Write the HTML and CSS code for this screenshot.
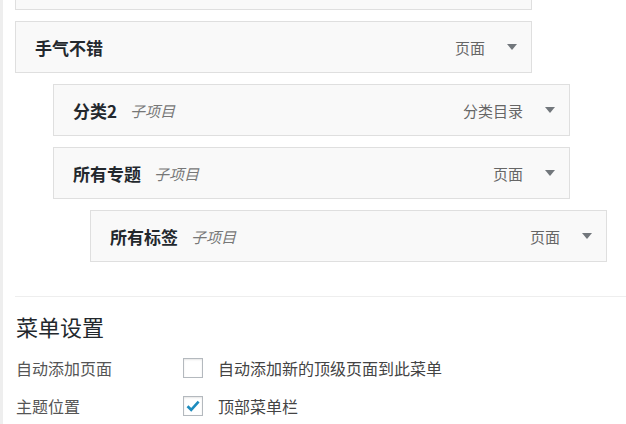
FILE: index.html
```html
<!DOCTYPE html>
<html lang="zh-CN">
<head>
  <meta charset="UTF-8">
  <meta name="viewport" content="width=device-width, initial-scale=1.0">
  <title>菜单</title>
  <link rel="stylesheet" href="styles.css">
</head>
<body>
  <div class="page">
    <!-- menu structure, first item scrolled out of view -->
    <ul class="menu-list">
      <li class="menu-item depth-0"></li>
      <li class="menu-item depth-0">
        <span class="item-title">手气不错</span>
        <span class="item-type">页面</span>
        <span class="item-arrow"></span>
      </li>
      <li class="menu-item depth-1">
        <span class="item-title">分类2</span>
        <span class="item-sub">子项目</span>
        <span class="item-type">分类目录</span>
        <span class="item-arrow"></span>
      </li>
      <li class="menu-item depth-1">
        <span class="item-title">所有专题</span>
        <span class="item-sub">子项目</span>
        <span class="item-type">页面</span>
        <span class="item-arrow"></span>
      </li>
      <li class="menu-item depth-2">
        <span class="item-title">所有标签</span>
        <span class="item-sub">子项目</span>
        <span class="item-type">页面</span>
        <span class="item-arrow"></span>
      </li>
    </ul>

    <div class="menu-settings">
      <h3>菜单设置</h3>
      <div class="setting-row">
        <div class="setting-label">自动添加页面</div>
        <label class="setting-field">
          <span class="checkbox"></span>
          自动添加新的顶级页面到此菜单
        </label>
      </div>
      <div class="setting-row">
        <div class="setting-label">主题位置</div>
        <label class="setting-field">
          <span class="checkbox checked">
            <svg width="16" height="16" viewBox="0 0 16 16"><path d="M2.5 8.2 L6.2 11.8 L13.6 3.6" fill="none" stroke="#1e8cbe" stroke-width="2.6"/></svg>
          </span>
          顶部菜单栏
        </label>
      </div>
    </div>
  </div>
</body>
</html>
```

FILE: styles.css
```css
body {
  margin: 0;
  padding: 0;
  background-color: #eeeeee;
  font-family: "Noto Sans CJK SC", "Noto Sans", sans-serif;
  color: #23282d;
  overflow: hidden;
}

.page {
  margin-left: 3px;
  background-color: #ffffff;
  height: 424px;
  overflow: hidden;
}

.menu-list {
  list-style: none;
  margin: -42px 0 0 0;
  padding: 0;
}

.menu-item {
  box-sizing: border-box;
  width: 517px;
  height: 52px;
  margin-bottom: 11px;
  display: flex;
  align-items: center;
  padding: 0 14px 0 19px;
  background-color: #f9f9f9;
  border: 1px solid #dfdfdf;
}

.depth-0 {
  margin-left: 12px;
}

.depth-1 {
  margin-left: 50px;
}

.depth-2 {
  margin-left: 87px;
}

.item-title {
  font-size: 17px;
  font-weight: bold;
  color: #23282d;
}

.item-sub {
  margin-left: 13px;
  font-size: 15px;
  font-style: italic;
  color: #777;
}

.item-type {
  margin-left: auto;
  font-size: 15px;
  color: #666;
}

.item-arrow {
  margin-left: 22px;
  width: 0;
  height: 0;
  border-left: 5px solid transparent;
  border-right: 5px solid transparent;
  border-top: 6px solid #72777c;
}

.menu-settings {
  margin: 34px 0 0 12px;
  border-top: 1px solid #eeeeee;
}

.menu-settings h3 {
  margin: 14px 0 8px 1px;
  font-size: 22px;
  font-weight: normal;
  color: #23282d;
  line-height: 30px;
}

.setting-row {
  display: flex;
  align-items: center;
  height: 38px;
}

.setting-label {
  width: 167px;
  padding-left: 1px;
  font-size: 16px;
  color: #555;
}

.setting-field {
  display: flex;
  align-items: center;
  font-size: 16px;
  color: #444;
}

.checkbox {
  box-sizing: border-box;
  width: 20px;
  height: 20px;
  margin-right: 15px;
  border: 1px solid #b4b9be;
  background-color: #fff;
  box-shadow: inset 0 1px 2px rgba(0, 0, 0, 0.1);
  display: flex;
  align-items: center;
  justify-content: center;
}
```
